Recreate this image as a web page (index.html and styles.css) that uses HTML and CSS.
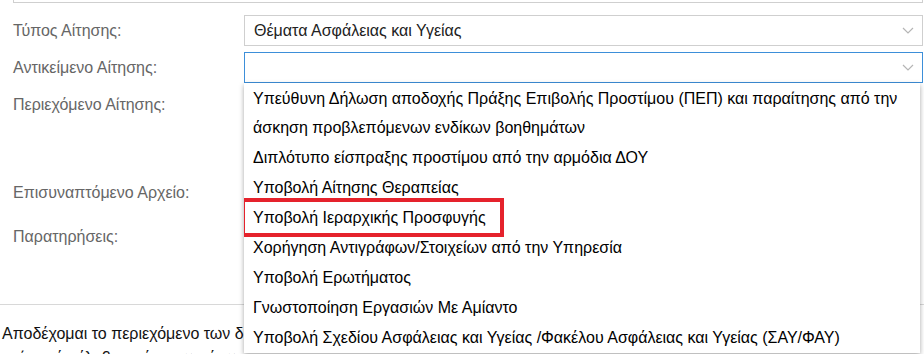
FILE: index.html
```html
<!DOCTYPE html>
<html>
    <head>
        <title>Αίτηση</title>
        <meta charset="utf-8"/>
        <link rel="stylesheet" href="styles.css">
    </head>
    <body class="body">
        <div class="top_box"></div>
        <div class="form">
            <div class="row">
                <label class="label">Τύπος Αίτησης:</label>
                <div class="select">
                    <span>Θέματα Ασφάλειας και Υγείας</span>
                    <svg class="chev" width="12" height="7" viewBox="0 0 12 7"><polyline points="1,1 6,6 11,1" fill="none" stroke="#b5b5b5" stroke-width="1.2"/></svg>
                </div>
            </div>
            <div class="row">
                <label class="label">Αντικείμενο Αίτησης:</label>
                <div class="select active">
                    <span></span>
                    <svg class="chev" width="12" height="7" viewBox="0 0 12 7"><polyline points="1,1 6,6 11,1" fill="none" stroke="#b5b5b5" stroke-width="1.2"/></svg>
                </div>
                <ul class="menu">
                    <li>Υπεύθυνη Δήλωση αποδοχής Πράξης Επιβολής Προστίμου (ΠΕΠ) και παραίτησης από την άσκηση προβλεπόμενων ενδίκων βοηθημάτων</li>
                    <li>Διπλότυπο είσπραξης προστίμου από την αρμόδια ΔΟΥ</li>
                    <li>Υποβολή Αίτησης Θεραπείας</li>
                    <li><span class="mark">Υποβολή Ιεραρχικής Προσφυγής</span></li>
                    <li>Χορήγηση Αντιγράφων/Στοιχείων από την Υπηρεσία</li>
                    <li>Υποβολή Ερωτήματος</li>
                    <li>Γνωστοποίηση Εργασιών Με Αμίαντο</li>
                    <li>Υποβολή Σχεδίου Ασφάλειας και Υγείας /Φακέλου Ασφάλειας και Υγείας (ΣΑΥ/ΦΑΥ)</li>
                </ul>
            </div>
            <div class="row tall">
                <label class="label">Περιεχόμενο Αίτησης:</label>
            </div>
            <div class="row mid">
                <label class="label">Επισυναπτόμενο Αρχείο:</label>
            </div>
            <div class="row">
                <label class="label">Παρατηρήσεις:</label>
            </div>
        </div>
        <hr class="line">
        <p class="accept">Αποδέχομαι το περιεχόμενο των δηλώσεων που περιλαμβάνονται στην αίτηση και βεβαιώνω ότι τα στοιχεία είναι αληθή. Δηλώνω επίσης ότι έλαβα γνώση των όρων χρήσης της υπηρεσίας.</p>
    </body>
</html>
```
FILE: styles.css
```css
.body{
    margin:0px;
    font-family:"Liberation Sans", Arial, sans-serif;
    background-color:white;
}
.top_box{
    height:2px;
    margin-left:13px;
    margin-right:1px;
    border:1px solid #cfcfcf;
    border-top:none;
}
.form{
    padding-top:12px;
    position:relative;
}
.row{
    display:flex;
    margin-bottom:6px;
    position:relative;
}
.label{
    width:231px;
    flex:none;
    padding-left:13px;
    color:#666;
    font-size:16px;
    line-height:31px;
}
.select{
    flex:1;
    height:31px;
    box-sizing:border-box;
    border:1px solid #cfcfcf;
    margin-right:1px;
    padding:0 9px 0 9px;
    display:flex;
    justify-content:space-between;
    align-items:center;
    font-size:16px;
    color:#222;
}
.select.active{
    border-color:#3d8fd9;
}
.chev{
    margin-right:-1px;
}
.tall{
    height:82px;
}
.mid{
    height:38px;
}
.menu{
    position:absolute;
    left:244px;
    top:31px;
    width:676px;
    height:270px;
    margin:0;
    padding:0;
    list-style:none;
    background-color:white;
    box-shadow:0px 2px 5px rgba(0,0,0,0.35);
    z-index:2;
    overflow:hidden;
}
.menu li{
    padding:0.5px 9px;
    font-size:16px;
    line-height:29px;
    color:#000;
}
.mark{
    position:relative;
}
.mark::after{
    content:'';
    position:absolute;
    left:-12px;
    right:-18px;
    top:-11px;
    bottom:-11px;
    border:4px solid #e5222c;
}
.line{
    margin:52px 0 0 0;
    border:none;
    border-top:1px solid #d8d8d8;
}
.accept{
    margin:17px 0 0 2px;
    font-size:16px;
    line-height:24px;
    color:#111;
}
```
